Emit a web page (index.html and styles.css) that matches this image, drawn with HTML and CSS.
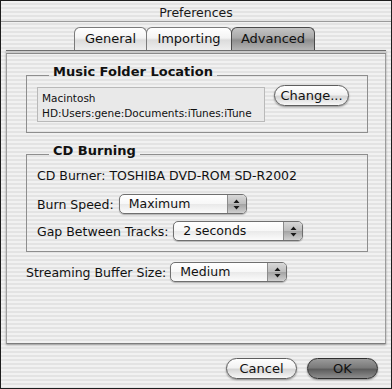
FILE: index.html
```html
<!DOCTYPE html>
<html lang="en">
<head>
    <meta charset="UTF-8">
    <title>Preferences</title>
    <link rel="stylesheet" href="styles.css">
</head>
<body>
    <div class="window">
        <!-- Title Bar -->
        <div class="titlebar">Preferences</div>

        <!-- Tabs -->
        <div class="tabs">
            <div class="tab tab-general">General</div>
            <div class="tab tab-importing">Importing</div>
            <div class="tab tab-advanced tab-active">Advanced</div>
        </div>

        <!-- Tab Panel -->
        <div class="panel">
            <div class="tab-band"></div>

            <fieldset class="group group-music">
                <legend>Music Folder Location</legend>
                <div class="path-field">Macintosh<br>HD:Users:gene:Documents:iTunes:iTune</div>
                <button class="btn btn-change">Change...</button>
            </fieldset>

            <fieldset class="group group-cd">
                <legend>CD Burning</legend>
                <div class="row row-burner">CD Burner: TOSHIBA DVD-ROM SD-R2002</div>
                <div class="row row-speed">
                    <span class="label">Burn Speed:</span>
                    <div class="popup popup-speed">
                        <span class="popup-value">Maximum</span>
                        <span class="popup-arrows">
                            <svg viewBox="0 0 7 11" width="7" height="11"><path d="M3.5 0.5 L6.5 4 L0.5 4 Z M3.5 10.5 L6.5 7 L0.5 7 Z" fill="#1a1a1a"/></svg>
                        </span>
                    </div>
                </div>
                <div class="row row-gap">
                    <span class="label">Gap Between Tracks:</span>
                    <div class="popup popup-gap">
                        <span class="popup-value">2 seconds</span>
                        <span class="popup-arrows">
                            <svg viewBox="0 0 7 11" width="7" height="11"><path d="M3.5 0.5 L6.5 4 L0.5 4 Z M3.5 10.5 L6.5 7 L0.5 7 Z" fill="#1a1a1a"/></svg>
                        </span>
                    </div>
                </div>
            </fieldset>

            <div class="row row-stream">
                <span class="label">Streaming Buffer Size:</span>
                <div class="popup popup-stream">
                    <span class="popup-value">Medium</span>
                    <span class="popup-arrows">
                        <svg viewBox="0 0 7 11" width="7" height="11"><path d="M3.5 0.5 L6.5 4 L0.5 4 Z M3.5 10.5 L6.5 7 L0.5 7 Z" fill="#1a1a1a"/></svg>
                    </span>
                </div>
            </div>
        </div>

        <!-- Dialog Buttons -->
        <div class="actions">
            <button class="btn btn-cancel">Cancel</button>
            <button class="btn btn-ok">OK</button>
        </div>
    </div>
</body>
</html>
```

FILE: styles.css
```css
/* General Styles */
body {
    margin: 0;
    padding: 0;
    background: #ffffff;
    font-family: 'DejaVu Sans', 'Liberation Sans', sans-serif;
    font-size: 12.5px;
    color: #111111;
}

/* Window with Aqua pinstripes */
.window {
    width: 392px;
    height: 389px;
    box-sizing: border-box;
    border: 1px solid #1e1e1e;
    background: repeating-linear-gradient(to bottom, #f1f1f1 0, #f1f1f1 2px, #e3e3e3 2px, #e3e3e3 4px);
}

/* Title Bar */
.titlebar {
    height: 20px;
    line-height: 24px;
    text-align: center;
    border-bottom: 1px solid #9a9a9a;
    color: #1a1a1a;
}

/* Tabs */
.tabs {
    display: flex;
    justify-content: center;
    margin-top: 5px;
    padding-right: 4px;
}

.tab {
    height: 23px;
    line-height: 22px;
    box-sizing: border-box;
    font-size: 13px;
    text-align: center;
    border: 1px solid #7a7a7a;
    border-bottom: none;
    border-radius: 6px 6px 0 0;
    background: linear-gradient(to bottom, #ffffff 0%, #f4f4f4 45%, #dcdcdc 55%, #eeeeee 100%);
    margin-right: -1px;
}

.tab-general { width: 73px; }
.tab-importing { width: 86px; }
.tab-advanced { width: 84px; }

.tab-active {
    border-color: #4a4a4a;
    background: linear-gradient(to bottom, #c4c4c4 0%, #a9a9a9 45%, #8e8e8e 55%, #b4b4b4 100%);
}

/* Tab Panel */
.panel {
    height: 294px;
    box-sizing: border-box;
    margin: 0 5px;
    border-left: 1px solid #9c9c9c;
    border-right: 1px solid #9c9c9c;
    border-bottom: 1px solid #7c7c7c;
    box-shadow: 0 1px 2px rgba(0, 0, 0, 0.35);
}

.tab-band {
    height: 2px;
    background: #c9c9c9;
    border-top: 1px solid #6e6e6e;
    border-bottom: 1px solid #8a8a8a;
    margin: 0 -1px 10px;
}

/* Group Boxes */
.group {
    margin: 0 17px 0 19px;
    padding: 0 10px 10px;
    border: 1px solid #8e8e8e;
    min-width: 0;
}

/* title sits above the line, like the Aqua group box */
.group legend {
    font-weight: bold;
    font-size: 13px;
    line-height: 15px;
    padding: 0 4px 8px;
    margin-left: 12px;
}

.group-music {
    display: flex;
    align-items: flex-start;
}

.path-field {
    width: 228px;
    height: 35px;
    box-sizing: border-box;
    padding: 3px 4px;
    font-size: 10.5px;
    line-height: 15px;
    white-space: nowrap;
    overflow: hidden;
    background: #e9e9e9;
    border: 1px solid #b9b9b9;
}

.group-cd {
    margin-top: 10px;
}

/* Rows */
.row {
    display: flex;
    align-items: center;
    gap: 5px;
}

.row-burner {
    line-height: 20px;
}

.row-speed {
    margin-top: 8px;
}

.row-gap {
    margin-top: 7px;
}

.row-stream {
    margin: 10px 0 0 19px;
    gap: 4px;
}

/* Popup Buttons */
.popup {
    display: flex;
    height: 20px;
    box-sizing: border-box;
    border: 1px solid #6f6f6f;
    border-radius: 5px;
    overflow: hidden;
    background: linear-gradient(to bottom, #ffffff 0%, #f7f7f7 50%, #e9e9e9 51%, #fbfbfb 100%);
    box-shadow: 0 1px 1px rgba(0, 0, 0, 0.25);
}

.popup-value {
    flex: 1;
    padding-left: 9px;
    line-height: 18px;
}

.popup-arrows {
    width: 18px;
    display: flex;
    align-items: center;
    justify-content: center;
    border-left: 1px solid #8c8c8c;
    background: linear-gradient(to bottom, #d8d8d8 0%, #bdbdbd 50%, #a3a3a3 51%, #cfcfcf 100%);
}

.popup-speed { width: 128px; }
.popup-gap { width: 130px; }
.popup-stream { width: 117px; }

/* Push Buttons */
.btn {
    height: 21px;
    box-sizing: border-box;
    padding: 0;
    font-family: inherit;
    font-size: 13px;
    color: #111111;
    border: 1px solid #5e5e5e;
    border-radius: 11px;
    background: linear-gradient(to bottom, #ffffff 0%, #f2f2f2 45%, #d6d6d6 55%, #f7f7f7 100%);
    box-shadow: 0 1px 2px rgba(0, 0, 0, 0.4);
}

.btn-change {
    width: 75px;
    margin: -2px 0 0 9px;
}

.actions {
    display: flex;
    justify-content: flex-end;
    gap: 10px;
    margin-top: 14px;
    padding-right: 13px;
}

.btn-cancel { width: 71px; }

.btn-ok {
    width: 71px;
    border-color: #2e2e2e;
    background: linear-gradient(to bottom, #9a9a9a 0%, #7a7a7a 45%, #5d5d5d 55%, #8e8e8e 100%);
}
```
